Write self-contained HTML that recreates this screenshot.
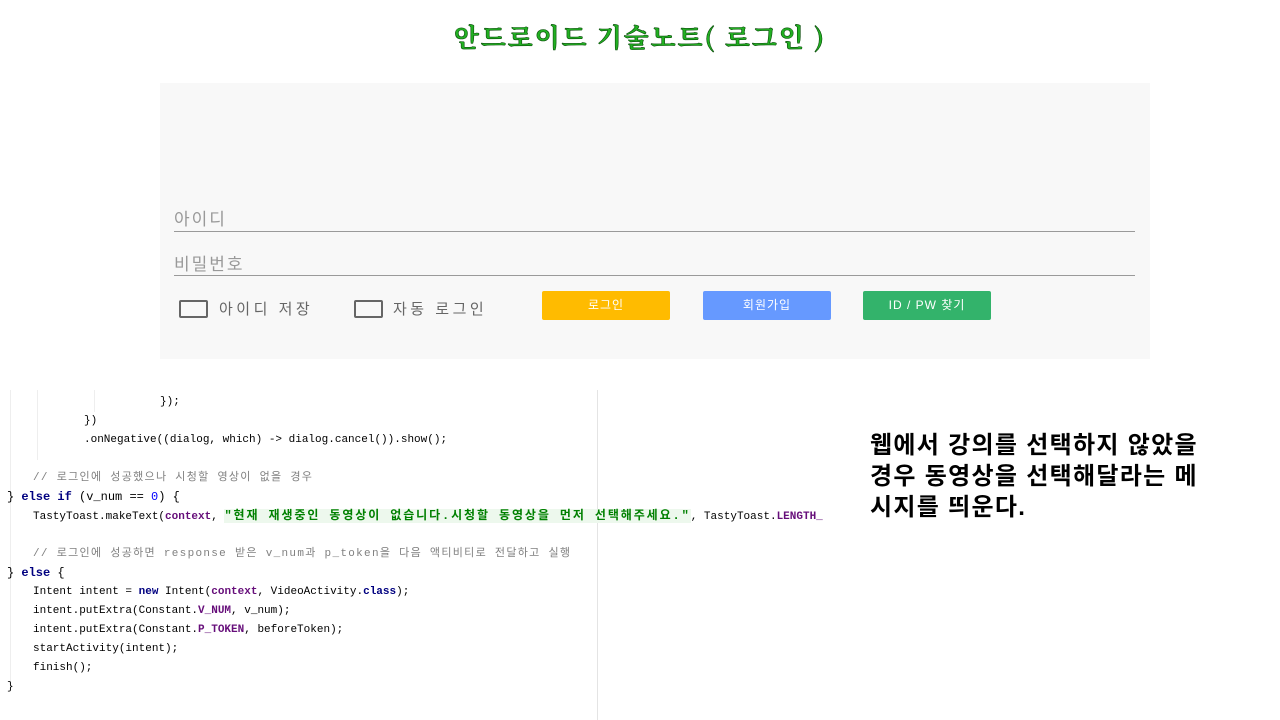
<!DOCTYPE html>
<html><head><meta charset="utf-8"><style>
body{margin:0;width:1280px;height:720px;background:#fff;position:relative;overflow:hidden;font-family:"Liberation Sans","Noto Sans CJK KR",sans-serif}
.title{position:absolute;left:0;width:1280px;top:18px;text-align:center;font-size:26px;font-weight:bold;color:#22b022;-webkit-text-stroke:0.6px #0a4a0a;font-family:"Noto Serif CJK SC","Noto Sans CJK KR",serif;letter-spacing:1.8px}
.panel{position:absolute;left:160px;top:83px;width:990px;height:276px;background:#f8f8f8}
.inp{position:absolute;left:14px;width:961px;border-bottom:1.5px solid #9a9a9a;color:#999;font-size:17px;letter-spacing:2px}
.cb{position:absolute;top:217px;width:25px;height:14px;border:2px solid #666;border-radius:2px}
.lbl{position:absolute;top:215px;font-size:15px;color:#666;letter-spacing:3.5px}
.btn{position:absolute;top:208px;width:128px;height:29px;border-radius:2px;color:#fff;font-size:12px;text-align:center;line-height:28px;letter-spacing:1px}
.code{position:absolute;left:0;top:390px;font-family:"Liberation Mono","Noto Sans CJK KR",monospace;font-size:11px;color:#000}
.l{position:absolute;white-space:pre;height:19px;line-height:19px}
.k{color:#000080;font-weight:bold}.p{color:#660e7a;font-weight:bold}.c{color:#808080}.s{background:#edf8ed;color:#008000;font-weight:bold;font-size:12px;letter-spacing:1.9px}
.kr{letter-spacing:1.3px}
.note{position:absolute;left:870px;top:430px;font-size:24px;line-height:31px;color:#000;font-weight:bold;letter-spacing:1.3px;font-family:"Liberation Sans","Noto Sans CJK KR",sans-serif}
</style></head><body>
<div class="title">안드로이드 기술노트( 로그인 )</div>
<div class="panel">
<div class="inp" style="top:122px;height:26px">아이디</div>
<div class="inp" style="top:167px;height:25px">비밀번호</div>
<div class="cb" style="left:19px"></div><div class="lbl" style="left:59px">아이디 저장</div>
<div class="cb" style="left:194px"></div><div class="lbl" style="left:233px">자동 로그인</div>
<div class="btn" style="left:382px;background:#ffbb00">로그인</div>
<div class="btn" style="left:543px;background:#6699ff">회원가입</div>
<div class="btn" style="left:703px;background:#33b36b">ID / PW 찾기</div>
</div>
<div style="position:absolute;left:597px;top:390px;width:1px;height:330px;background:#e4e4e4"></div>
<div style="position:absolute;left:10px;top:390px;width:1px;height:300px;background:#eee"></div>
<div style="position:absolute;left:37px;top:390px;width:1px;height:70px;background:#eee"></div>
<div style="position:absolute;left:94px;top:390px;width:1px;height:22px;background:#eee"></div>
<div class="code">
<div class="l" style="top:3px;left:160px">});</div>
<div class="l" style="top:22px;left:84px">})</div>
<div class="l" style="top:41px;left:84px">.onNegative((dialog, which) -&gt; dialog.cancel()).show();</div>
<div class="l c kr" style="top:79px;left:33px">// 로그인에 성공했으나 시청할 영상이 없을 경우</div>
<div class="l" style="top:98px;left:7px;font-size:12px">} <span class="k">else if</span> (v_num == <span style="color:#00f">0</span>) {</div>
<div class="l" style="top:117px;left:33px">TastyToast.makeText(<span class="p">context</span>, <span class="s">"현재 재생중인 동영상이 없습니다.시청할 동영상을 먼저 선택해주세요."</span>, TastyToast.<span class="p">LENGTH_</span></div>
<div class="l c kr" style="top:155px;left:33px">// 로그인에 성공하면 response 받은 v_num과 p_token을 다음 액티비티로 전달하고 실행</div>
<div class="l" style="top:174px;left:7px;font-size:12px">} <span class="k">else</span> {</div>
<div class="l" style="top:193px;left:33px">Intent intent = <span class="k">new</span> Intent(<span class="p">context</span>, VideoActivity.<span class="k">class</span>);</div>
<div class="l" style="top:212px;left:33px">intent.putExtra(Constant.<span class="p">V_NUM</span>, v_num);</div>
<div class="l" style="top:231px;left:33px">intent.putExtra(Constant.<span class="p">P_TOKEN</span>, beforeToken);</div>
<div class="l" style="top:250px;left:33px">startActivity(intent);</div>
<div class="l" style="top:269px;left:33px">finish();</div>
<div class="l" style="top:288px;left:7px">}</div>
</div>
<div class="note">웹에서 강의를 선택하지 않았을<br>경우 동영상을 선택해달라는 메<br>시지를 띄운다.</div>
</body></html>
